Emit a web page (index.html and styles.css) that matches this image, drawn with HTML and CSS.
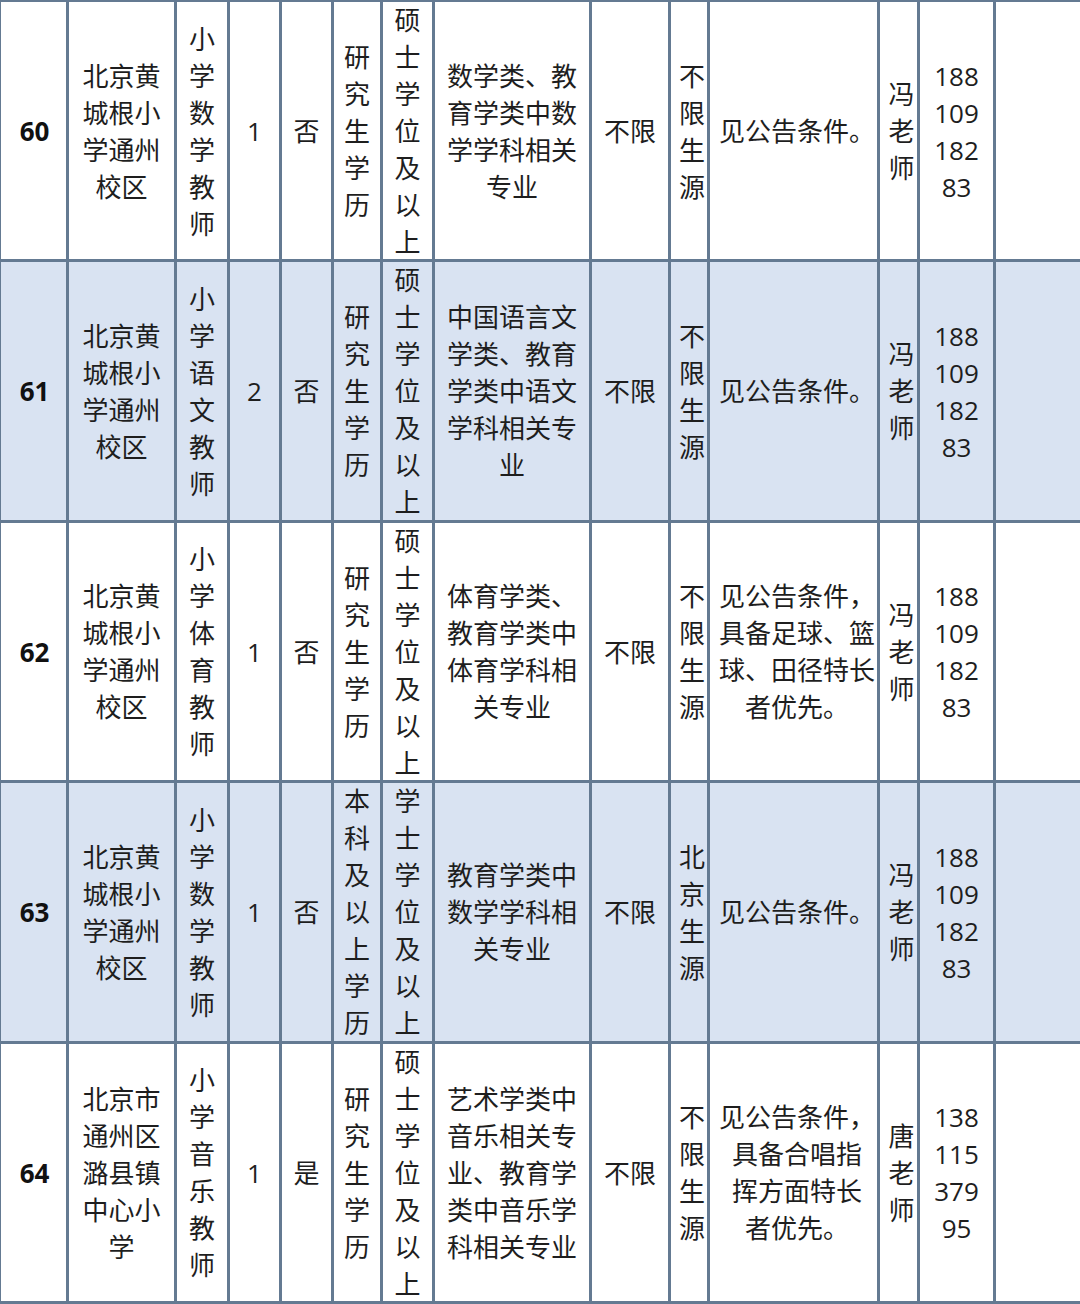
FILE: index.html
```html
<!DOCTYPE html>
<html lang="zh-CN">
<head>
<meta charset="utf-8">
<title>岗位表</title>
<link rel="stylesheet" href="styles.css">
</head>
<body>
<div class="sheet">
  <div class="row">
    <div class="c num">60</div>
    <div class="c school">北京黄城根小学通州校区</div>
    <div class="c">小学数学教师</div>
    <div class="c">1</div>
    <div class="c">否</div>
    <div class="c">研究生学历</div>
    <div class="c">硕士学位及以上</div>
    <div class="c major">数学类、教育学类中数学学科相关专业</div>
    <div class="c">不限</div>
    <div class="c narrow">不限生源</div>
    <div class="c cond">见公告条件。</div>
    <div class="c narrow">冯老师</div>
    <div class="c">188<br>109<br>182<br>83</div>
    <div class="c last"></div>
  </div>
  <div class="row alt">
    <div class="c num">61</div>
    <div class="c school">北京黄城根小学通州校区</div>
    <div class="c">小学语文教师</div>
    <div class="c">2</div>
    <div class="c">否</div>
    <div class="c">研究生学历</div>
    <div class="c">硕士学位及以上</div>
    <div class="c major">中国语言文学类、教育学类中语文学科相关专业</div>
    <div class="c">不限</div>
    <div class="c narrow">不限生源</div>
    <div class="c cond">见公告条件。</div>
    <div class="c narrow">冯老师</div>
    <div class="c">188<br>109<br>182<br>83</div>
    <div class="c last"></div>
  </div>
  <div class="row">
    <div class="c num">62</div>
    <div class="c school">北京黄城根小学通州校区</div>
    <div class="c">小学体育教师</div>
    <div class="c">1</div>
    <div class="c">否</div>
    <div class="c">研究生学历</div>
    <div class="c">硕士学位及以上</div>
    <div class="c major">体育学类、教育学类中体育学科相关专业</div>
    <div class="c">不限</div>
    <div class="c narrow">不限生源</div>
    <div class="c cond">见公告条件，<br>具备足球、篮<br>球、田径特长<br>者优先。</div>
    <div class="c narrow">冯老师</div>
    <div class="c">188<br>109<br>182<br>83</div>
    <div class="c last"></div>
  </div>
  <div class="row alt">
    <div class="c num">63</div>
    <div class="c school">北京黄城根小学通州校区</div>
    <div class="c">小学数学教师</div>
    <div class="c">1</div>
    <div class="c">否</div>
    <div class="c">本科及以上学历</div>
    <div class="c">学士学位及以上</div>
    <div class="c major">教育学类中数学学科相关专业</div>
    <div class="c">不限</div>
    <div class="c narrow">北京生源</div>
    <div class="c cond">见公告条件。</div>
    <div class="c narrow">冯老师</div>
    <div class="c">188<br>109<br>182<br>83</div>
    <div class="c last"></div>
  </div>
  <div class="row">
    <div class="c num">64</div>
    <div class="c school">北京市通州区潞县镇中心小学</div>
    <div class="c">小学音乐教师</div>
    <div class="c">1</div>
    <div class="c">是</div>
    <div class="c">研究生学历</div>
    <div class="c">硕士学位及以上</div>
    <div class="c major">艺术学类中音乐相关专业、教育学类中音乐学科相关专业</div>
    <div class="c">不限</div>
    <div class="c narrow">不限生源</div>
    <div class="c cond">见公告条件，<br>具备合唱指<br>挥方面特长<br>者优先。</div>
    <div class="c narrow">唐老师</div>
    <div class="c">138<br>115<br>379<br>95</div>
    <div class="c last"></div>
  </div>
</div>
</body>
</html>
```

FILE: styles.css
```css
html, body {
  margin: 0;
  padding: 0;
  overflow: hidden;
  background: #ffffff;
}

body {
  font-family: "Open Sans", "Noto Sans CJK SC", sans-serif;
  font-size: 26px;
  line-height: 37px;
  color: #1e1e1e;
}

.sheet {
  width: 1092px;
  margin-left: -2px;
  border-top: 2px solid #647a92;
  border-left: 3px solid #647a92;
}

.row {
  display: grid;
  grid-template-columns: 68px 108px 53px 52px 52px 49px 52px 157px 79px 39px 170px 40px 76px 1fr;
  height: 260.4px;
  box-sizing: border-box;
  border-bottom: 3px solid #647a92;
  background: #ffffff;
}

.row.alt {
  background: #d9e3f2;
}

.c {
  display: flex;
  align-items: center;
  justify-content: center;
  text-align: center;
  box-sizing: border-box;
  border-right: 3px solid #647a92;
  padding: 0 2px;
  min-width: 0;
}

.c.last {
  border-right: none;
}

.num {
  font-weight: 700;
  color: #111111;
  padding-left: 4px;
}

.school {
  padding: 0 8px;
}

.major {
  padding: 0 8px;
}

.narrow {
  padding: 0 0 0 6px;
}

.cond {
  padding: 0 0 0 7px;
}
```
